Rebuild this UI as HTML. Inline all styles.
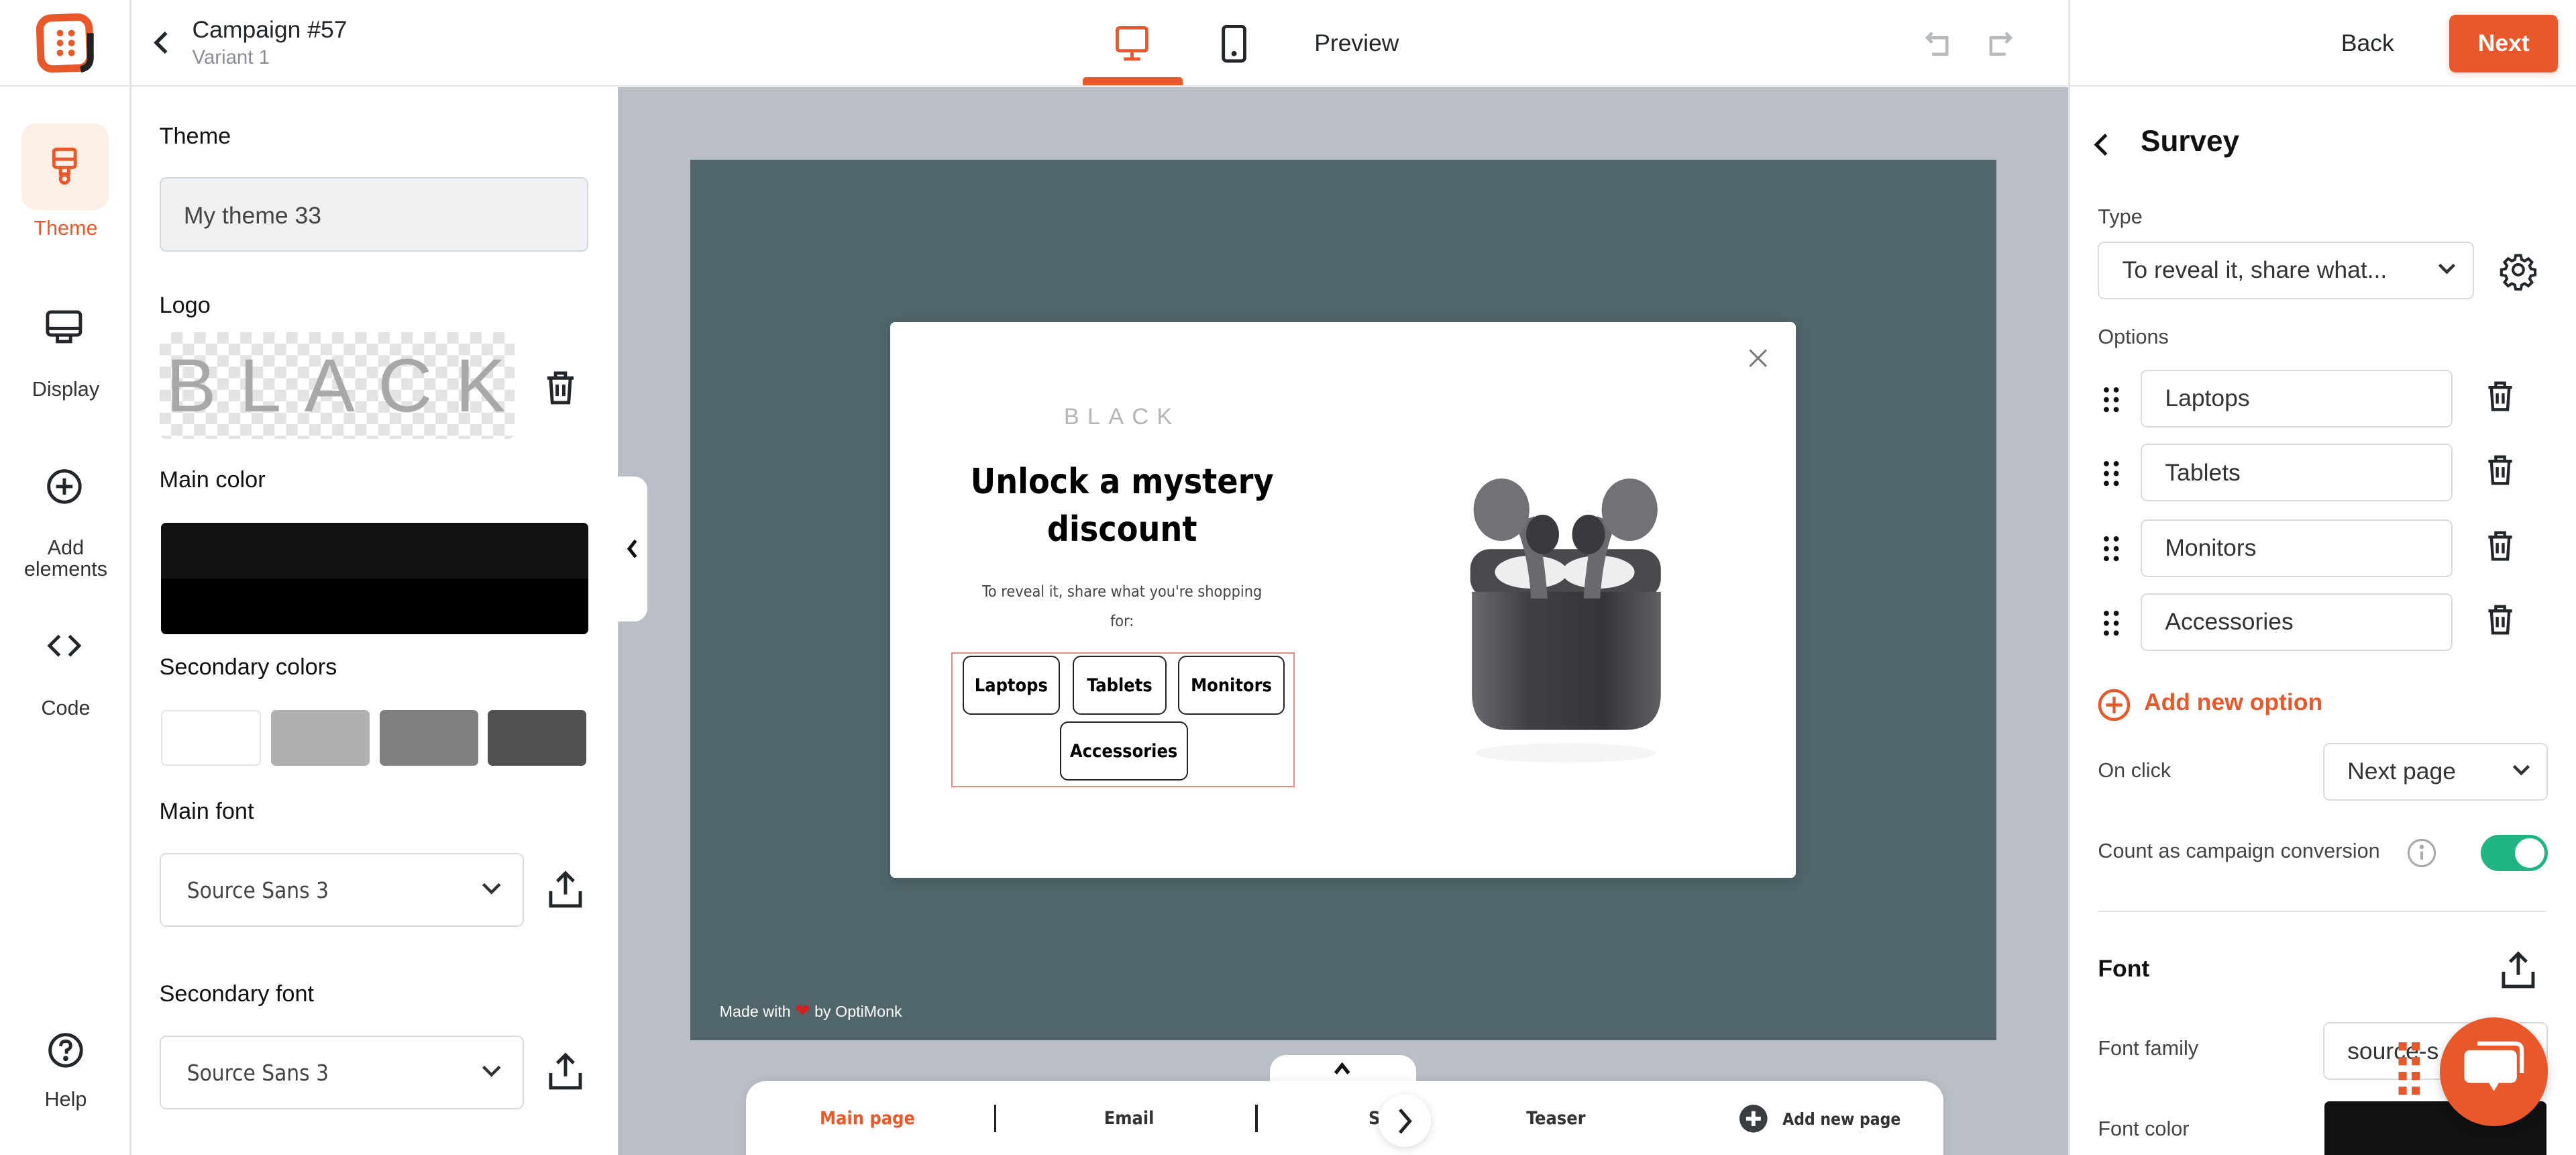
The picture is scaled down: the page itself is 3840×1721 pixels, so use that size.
<!DOCTYPE html>
<html><head><meta charset="utf-8">
<style>
html,body{margin:0;padding:0;width:3840px;height:1721px;overflow:hidden;background:#fff}
#z{zoom:2.449;width:1568px;height:703px;position:relative;overflow:hidden;font-family:"Liberation Sans",sans-serif;color:#23262b}
.a{position:absolute}
.lbl{position:absolute;font-size:14px;color:#111}
.rl{position:absolute;font-size:12.5px;color:#333;text-align:center;width:80px;left:0}
.box{position:absolute;border:1px solid #d8dbe0;border-radius:4px;background:#fff;box-sizing:border-box}
.src{font-family:"DejaVu Sans Condensed","Liberation Sans",sans-serif}
.opt{position:absolute;border:1.2px solid #222;border-radius:5px;font-weight:bold;font-size:11px;display:flex;align-items:center;justify-content:center;box-sizing:border-box;color:#000}
svg{position:absolute;overflow:visible}
.ri{font-size:14.5px;color:#333;padding-left:14px;display:flex;align-items:center}
.sm{position:absolute;font-size:12.5px;color:#444}
</style></head><body><div id="z">

<div class="a" style="left:0;top:0;width:1568px;height:52px;background:#fff;border-bottom:1px solid #e3e5e8"></div>
<div class="a" style="left:79px;top:0;width:1px;height:703px;background:#e3e5e8"></div>
<div class="a" style="left:1259px;top:0;width:1px;height:703px;background:#e3e5e8"></div>

<svg style="left:22px;top:8px" width="36" height="36" viewBox="0 0 36 36">
<rect x="2.5" y="2.5" width="30" height="31" rx="7" fill="none" stroke="#e8582a" stroke-width="4.5" transform="rotate(-2 18 18)"/>
<path d="M33 12 V27 Q33 33 27 34" fill="none" stroke="#222" stroke-width="4"/>
<g fill="#e8582a"><circle cx="14.5" cy="12" r="2"/><circle cx="21.5" cy="12" r="2"/><circle cx="14.5" cy="18" r="2"/><circle cx="21.5" cy="18" r="2"/><circle cx="14.5" cy="24" r="2"/><circle cx="21.5" cy="24" r="2"/></g>
</svg>

<div class="a" style="left:13px;top:75px;width:53px;height:53px;background:#fdeee6;border-radius:9px"></div>
<svg style="left:30px;top:90px" width="20" height="26" viewBox="0 0 20 26" fill="none" stroke="#e8582a" stroke-width="2">
<rect x="3" y="1" width="13" height="11" rx="1.5"/><line x1="3" y1="7" x2="16" y2="7"/><path d="M7 12 V16 H12 V12"/><circle cx="9.5" cy="19" r="2.5"/></svg>
<div class="rl" style="top:132px;color:#e8582a">Theme</div>
<svg style="left:27px;top:188px" width="24" height="24" viewBox="0 0 24 24" fill="none" stroke="#23262b" stroke-width="2"><rect x="2" y="2" width="20" height="14" rx="2"/><line x1="2" y1="12" x2="22" y2="12"/><path d="M8 16 V20 H16 V16"/></svg>
<div class="rl" style="top:230px">Display</div>
<svg style="left:28px;top:285px" width="22" height="22" viewBox="0 0 22 22" fill="none" stroke="#23262b" stroke-width="2"><circle cx="11" cy="11" r="9.5"/><path d="M11 6 V16 M6 11 H16"/></svg>
<div class="rl" style="top:327px;line-height:13px">Add<br>elements</div>
<svg style="left:28px;top:386px" width="22" height="14" viewBox="0 0 22 14" fill="none" stroke="#23262b" stroke-width="2"><path d="M8 1 L2 7 L8 13 M14 1 L20 7 L14 13"/></svg>
<div class="rl" style="top:424px">Code</div>
<svg style="left:29px;top:628px" width="22" height="22" viewBox="0 0 22 22" fill="none" stroke="#23262b" stroke-width="2"><circle cx="11" cy="11" r="9.5"/><path d="M8 8.5 Q8 5.5 11 5.5 Q14 5.5 14 8.3 Q14 10 11.5 11 V13"/><circle cx="11" cy="16" r="0.6" fill="#23262b"/></svg>
<div class="rl" style="top:662px">Help</div>

<svg style="left:93px;top:18px" width="10" height="16" viewBox="0 0 10 16" fill="none" stroke="#23262b" stroke-width="2.2"><path d="M8 2 L2 8 L8 14"/></svg>
<div class="a" style="left:117px;top:10px;font-size:14.5px;color:#23262b">Campaign #57</div>
<div class="a" style="left:117px;top:28px;font-size:12px;color:#8a8f96">Variant 1</div>

<div class="lbl" style="left:97px;top:75px">Theme</div>
<div class="box" style="left:97px;top:108px;width:261px;height:45px;background:#eef0f2;border-color:#d4d7dc;font-size:14.5px;color:#444;padding:14px 0 0 14px">My theme 33</div>
<div class="lbl" style="left:97px;top:178px">Logo</div>
<div class="a" style="left:97px;top:202px;width:216px;height:65px;border-radius:4px;background-color:#fff;background-image:linear-gradient(45deg,#e3e3e3 25%,transparent 25%,transparent 75%,#e3e3e3 75%),linear-gradient(45deg,#e3e3e3 25%,transparent 25%,transparent 75%,#e3e3e3 75%);background-size:14px 14px;background-position:0 0,7px 7px;font-size:46px;letter-spacing:14px;color:#a8a8a8;line-height:65px;padding-left:4px;box-sizing:border-box;overflow:hidden">BLACK</div>
<svg style="left:331px;top:225px" width="20" height="22" viewBox="0 0 20 22" fill="none" stroke="#23262b" stroke-width="2"><path d="M2 5 H18 M7 5 V2 H13 V5 M4 5 L5 20 H15 L16 5 M8 9 V16 M12 9 V16"/></svg>
<div class="lbl" style="left:97px;top:284px">Main color</div>
<div class="a" style="left:98px;top:318px;width:260px;height:68px;border-radius:3px;background:linear-gradient(#111 0 50%,#000 50%)"></div>
<div class="lbl" style="left:97px;top:398px">Secondary colors</div>
<div class="a" style="left:98px;top:432px;width:61px;height:34px;border:1px solid #e5e5e5;box-sizing:border-box;border-radius:3px;background:#fff"></div>
<div class="a" style="left:165px;top:432px;width:60px;height:34px;border-radius:3px;background:#b0b0b0"></div>
<div class="a" style="left:231px;top:432px;width:60px;height:34px;border-radius:3px;background:#808080"></div>
<div class="a" style="left:297px;top:432px;width:60px;height:34px;border-radius:3px;background:#505050"></div>
<div class="lbl" style="left:97px;top:486px">Main font</div>
<div class="box src" style="left:97px;top:519px;width:222px;height:45px;font-size:13.5px;color:#444;padding:14px 0 0 16px">Source Sans 3</div>
<svg style="left:293px;top:537px" width="12" height="8" viewBox="0 0 12 8" fill="none" stroke="#333" stroke-width="1.8"><path d="M1 1 L6 6 L11 1"/></svg>
<svg style="left:333px;top:529px" width="22" height="24" viewBox="0 0 22 24" fill="none" stroke="#23262b" stroke-width="2"><path d="M11 15 V2 M6 7 L11 2 L16 7 M2 13 V22 H20 V13"/></svg>
<div class="lbl" style="left:97px;top:597px">Secondary font</div>
<div class="box src" style="left:97px;top:630px;width:222px;height:45px;font-size:13.5px;color:#444;padding:14px 0 0 16px">Source Sans 3</div>
<svg style="left:293px;top:648px" width="12" height="8" viewBox="0 0 12 8" fill="none" stroke="#333" stroke-width="1.8"><path d="M1 1 L6 6 L11 1"/></svg>
<svg style="left:333px;top:640px" width="22" height="24" viewBox="0 0 22 24" fill="none" stroke="#23262b" stroke-width="2"><path d="M11 15 V2 M6 7 L11 2 L16 7 M2 13 V22 H20 V13"/></svg>

<svg style="left:679px;top:16px" width="20" height="22" viewBox="0 0 20 22" fill="none" stroke="#e8582a" stroke-width="2"><rect x="1" y="1" width="18" height="14" rx="1.5"/><path d="M10 15 V20 M5 20 H15"/></svg>
<div class="a" style="left:659px;top:47px;width:61px;height:5px;background:#e8582a;border-radius:2px 2px 0 0"></div>
<svg style="left:743px;top:15px" width="16" height="24" viewBox="0 0 16 24" fill="none" stroke="#23262b" stroke-width="2"><rect x="1.5" y="1" width="13" height="21" rx="2"/><circle cx="8" cy="17.5" r="0.6" fill="#23262b"/></svg>
<div class="a" style="left:800px;top:18px;font-size:14.5px;color:#23262b">Preview</div>
<svg style="left:1171px;top:18px" width="18" height="18" viewBox="0 0 18 18" fill="none" stroke="#b5b8bd" stroke-width="1.8"><path d="M5 2 L2 5 L5 8 M2 5 H14 V15 H5"/></svg>
<svg style="left:1208px;top:18px" width="18" height="18" viewBox="0 0 18 18" fill="none" stroke="#b5b8bd" stroke-width="1.8"><path d="M13 2 L16 5 L13 8 M16 5 H4 V15 H13"/></svg>
<div class="a" style="left:1425px;top:18px;font-size:14.5px;color:#23262b">Back</div>
<div class="a" style="left:1491px;top:9px;width:66px;height:35px;background:#e8582a;border-radius:4px;color:#fff;font-size:14.5px;font-weight:bold;text-align:center;line-height:35px;box-shadow:0 1px 4px rgba(232,88,42,.3)">Next</div>

<div class="a" style="left:376px;top:53px;width:883px;height:650px;background:#babfc7"></div>
<div class="a" style="left:420px;top:97px;width:795px;height:536px;background:#50666a"></div>
<div class="a" style="left:376px;top:290px;width:18px;height:88px;background:#fff;border-radius:0 8px 8px 0"></div>
<svg style="left:381px;top:328px" width="8" height="12" viewBox="0 0 8 12" fill="none" stroke="#111" stroke-width="2"><path d="M6 1 L2 6 L6 11"/></svg>
<div class="a" style="left:438px;top:609px;font-size:9.5px;color:#fff">Made with <span style="color:#d02020;font-size:11px">&#10084;</span> by OptiMonk</div>

<div class="a" style="left:542px;top:196px;width:551px;height:338px;background:#fff;border-radius:3px;box-shadow:0 2px 8px rgba(0,0,0,.15)"></div>
<svg style="left:1064px;top:212px" width="12" height="12" viewBox="0 0 12 12" stroke="#777" stroke-width="1.2"><path d="M1 1 L11 11 M11 1 L1 11"/></svg>
<div class="a" style="left:583px;top:246px;width:200px;text-align:center;font-size:14px;letter-spacing:5px;color:#b5b5b5">BLACK</div>
<div class="a src" style="left:563px;top:279px;width:240px;text-align:center;font-size:21px;font-weight:bold;line-height:29px;color:#000">Unlock a mystery discount</div>
<div class="a src" style="left:590px;top:351px;width:186px;text-align:center;font-size:9.5px;line-height:18px;color:#444">To reveal it, share what you're shopping for:</div>
<div class="a" style="left:579px;top:397px;width:209px;height:82px;border:1px solid #e88a80;box-sizing:border-box"></div>
<div class="opt src" style="left:586px;top:399px;width:59px;height:36px">Laptops</div>
<div class="opt src" style="left:653px;top:399px;width:57px;height:36px">Tablets</div>
<div class="opt src" style="left:717px;top:399px;width:65px;height:36px">Monitors</div>
<div class="opt src" style="left:645px;top:439px;width:78px;height:36px">Accessories</div>

<svg style="left:860px;top:280px" width="180" height="200" viewBox="0 0 180 200">
<defs><linearGradient id="g" x1="0" x2="1"><stop offset="0" stop-color="#6a6a6e"/><stop offset=".3" stop-color="#404044"/><stop offset=".7" stop-color="#36363a"/><stop offset="1" stop-color="#606064"/></linearGradient></defs>
<ellipse cx="93" cy="178" rx="55" ry="6" fill="#f5f5f5"/>
<rect x="35" y="54" width="116" height="30" rx="12" fill="#4a4a4e"/>
<ellipse cx="72" cy="68" rx="22" ry="10" fill="#eee"/><ellipse cx="113" cy="68" rx="22" ry="10" fill="#eee"/>
<path d="M36 80 H151 V142 Q151 164 129 164 H58 Q36 164 36 142 Z" fill="url(#g)"/>
<path d="M62 38 Q70 55 72 84 L82 84 Q80 55 74 34 Z" fill="#6a6a6e"/>
<ellipse cx="54" cy="30" rx="17" ry="19" fill="#727276"/>
<ellipse cx="79" cy="45" rx="10" ry="12" fill="#3a3a3e"/>
<path d="M124 38 Q116 55 114 84 L104 84 Q106 55 112 34 Z" fill="#6a6a6e"/>
<ellipse cx="132" cy="30" rx="17" ry="19" fill="#727276"/>
<ellipse cx="107" cy="45" rx="10" ry="12" fill="#3a3a3e"/>
</svg>

<div class="a" style="left:773px;top:642px;width:89px;height:30px;background:#fff;border-radius:10px 10px 0 0"></div>
<svg style="left:811px;top:646px" width="12" height="8" viewBox="0 0 12 8" fill="none" stroke="#111" stroke-width="2.2"><path d="M2 7 L6 2 L10 7"/></svg>
<div class="a" style="left:454px;top:658px;width:729px;height:60px;background:#fff;border-radius:12px;box-shadow:0 0 6px rgba(0,0,0,.08)"></div>
<div class="a src" style="left:499px;top:674px;font-size:11px;font-weight:bold;color:#e8582a">Main page</div>
<div class="a" style="left:605px;top:672px;width:1.5px;height:17px;background:#222"></div>
<div class="a src" style="left:672px;top:674px;font-size:11px;font-weight:bold;color:#333">Email</div>
<div class="a" style="left:764px;top:672px;width:1.5px;height:17px;background:#222"></div>
<div class="a src" style="left:833px;top:674px;font-size:11px;font-weight:bold;color:#333">S</div>
<div class="a" style="left:839px;top:666px;width:32px;height:32px;border-radius:50%;background:#fff;box-shadow:0 1px 5px rgba(0,0,0,.15)"></div>
<svg style="left:850px;top:674px" width="10" height="16" viewBox="0 0 10 16" fill="none" stroke="#222" stroke-width="2"><path d="M2 1 L8 8 L2 15"/></svg>
<div class="a src" style="left:929px;top:674px;font-size:11px;font-weight:bold;color:#333">Teaser</div>
<svg style="left:1059px;top:672px" width="17" height="17" viewBox="0 0 17 17"><circle cx="8.5" cy="8.5" r="8.5" fill="#3a3d42"/><path d="M8.5 4 V13 M4 8.5 H13" stroke="#fff" stroke-width="2.4"/></svg>
<div class="a src" style="left:1085px;top:675px;font-size:10px;font-weight:bold;color:#333">Add new page</div>

<svg style="left:1274px;top:80px" width="10" height="16" viewBox="0 0 10 16" fill="none" stroke="#111" stroke-width="2"><path d="M8 2 L2 8 L8 14"/></svg>
<div class="a" style="left:1303px;top:76px;font-size:18px;font-weight:bold;color:#111">Survey</div>
<div class="sm" style="left:1277px;top:125px">Type</div>
<div class="box ri" style="left:1277px;top:147px;width:229px;height:35px">To reveal it, share what...</div>
<svg style="left:1484px;top:160px" width="11" height="7" viewBox="0 0 11 7" fill="none" stroke="#333" stroke-width="1.8"><path d="M1 1 L5.5 5.5 L10 1"/></svg>
<svg style="left:1522px;top:153px" width="22" height="22" viewBox="0 0 24 24" fill="none" stroke="#23262b" stroke-width="1.8"><path d="M10.3 2.5h3.4l.6 2.8 2 .9 2.4-1.6 2.4 2.4-1.6 2.4.9 2 2.8.6v3.4l-2.8.6-.9 2 1.6 2.4-2.4 2.4-2.4-1.6-2 .9-.6 2.8h-3.4l-.6-2.8-2-.9-2.4 1.6-2.4-2.4 1.6-2.4-.9-2-2.8-.6v-3.4l2.8-.6.9-2-1.6-2.4 2.4-2.4 2.4 1.6 2-.9z"/><circle cx="12" cy="12" r="3.5"/></svg>
<div class="sm" style="left:1277px;top:198px">Options</div>

<svg style="left:1280px;top:235px" width="10" height="16" viewBox="0 0 10 16" fill="#111"><circle cx="2" cy="2" r="1.6"/><circle cx="8" cy="2" r="1.6"/><circle cx="2" cy="8" r="1.6"/><circle cx="8" cy="8" r="1.6"/><circle cx="2" cy="14" r="1.6"/><circle cx="8" cy="14" r="1.6"/></svg>
<div class="box ri" style="left:1303px;top:225px;width:190px;height:35px">Laptops</div>
<svg style="left:1513px;top:231px" width="18" height="20" viewBox="0 0 20 22" fill="none" stroke="#23262b" stroke-width="2"><path d="M2 5 H18 M7 5 V2 H13 V5 M4 5 L5 20 H15 L16 5 M8 9 V16 M12 9 V16"/></svg>

<svg style="left:1280px;top:280px" width="10" height="16" viewBox="0 0 10 16" fill="#111"><circle cx="2" cy="2" r="1.6"/><circle cx="8" cy="2" r="1.6"/><circle cx="2" cy="8" r="1.6"/><circle cx="8" cy="8" r="1.6"/><circle cx="2" cy="14" r="1.6"/><circle cx="8" cy="14" r="1.6"/></svg>
<div class="box ri" style="left:1303px;top:270px;width:190px;height:35px">Tablets</div>
<svg style="left:1513px;top:276px" width="18" height="20" viewBox="0 0 20 22" fill="none" stroke="#23262b" stroke-width="2"><path d="M2 5 H18 M7 5 V2 H13 V5 M4 5 L5 20 H15 L16 5 M8 9 V16 M12 9 V16"/></svg>

<svg style="left:1280px;top:326px" width="10" height="16" viewBox="0 0 10 16" fill="#111"><circle cx="2" cy="2" r="1.6"/><circle cx="8" cy="2" r="1.6"/><circle cx="2" cy="8" r="1.6"/><circle cx="8" cy="8" r="1.6"/><circle cx="2" cy="14" r="1.6"/><circle cx="8" cy="14" r="1.6"/></svg>
<div class="box ri" style="left:1303px;top:316px;width:190px;height:35px">Monitors</div>
<svg style="left:1513px;top:322px" width="18" height="20" viewBox="0 0 20 22" fill="none" stroke="#23262b" stroke-width="2"><path d="M2 5 H18 M7 5 V2 H13 V5 M4 5 L5 20 H15 L16 5 M8 9 V16 M12 9 V16"/></svg>

<svg style="left:1280px;top:371px" width="10" height="16" viewBox="0 0 10 16" fill="#111"><circle cx="2" cy="2" r="1.6"/><circle cx="8" cy="2" r="1.6"/><circle cx="2" cy="8" r="1.6"/><circle cx="8" cy="8" r="1.6"/><circle cx="2" cy="14" r="1.6"/><circle cx="8" cy="14" r="1.6"/></svg>
<div class="box ri" style="left:1303px;top:361px;width:190px;height:35px">Accessories</div>
<svg style="left:1513px;top:367px" width="18" height="20" viewBox="0 0 20 22" fill="none" stroke="#23262b" stroke-width="2"><path d="M2 5 H18 M7 5 V2 H13 V5 M4 5 L5 20 H15 L16 5 M8 9 V16 M12 9 V16"/></svg>

<svg style="left:1277px;top:419px" width="20" height="20" viewBox="0 0 20 20" fill="none" stroke="#e8582a" stroke-width="1.8"><circle cx="10" cy="10" r="8.8"/><path d="M10 5 V15 M5 10 H15"/></svg>
<div class="a" style="left:1305px;top:419px;font-size:14.5px;font-weight:bold;color:#e8582a">Add new option</div>
<div class="sm" style="left:1277px;top:462px">On click</div>
<div class="box ri" style="left:1414px;top:452px;width:137px;height:35px">Next page</div>
<svg style="left:1529px;top:465px" width="11" height="7" viewBox="0 0 11 7" fill="none" stroke="#333" stroke-width="1.8"><path d="M1 1 L5.5 5.5 L10 1"/></svg>
<div class="sm" style="left:1277px;top:511px">Count as campaign conversion</div>
<svg style="left:1465px;top:510px" width="18" height="18" viewBox="0 0 18 18" fill="none" stroke="#aaa" stroke-width="1.3"><circle cx="9" cy="9" r="8"/><path d="M9 8 V13" stroke-width="1.6"/><circle cx="9" cy="5.3" r="0.7" fill="#aaa"/></svg>
<div class="a" style="left:1510px;top:508px;width:41px;height:22px;border-radius:11px;background:#22b584"></div>
<div class="a" style="left:1531px;top:510px;width:18px;height:18px;border-radius:50%;background:#fff"></div>
<div class="a" style="left:1277px;top:554px;width:273px;height:1px;background:#e3e5e8"></div>
<div class="a" style="left:1277px;top:581px;font-size:14.5px;font-weight:bold;color:#111">Font</div>
<svg style="left:1522px;top:578px" width="22" height="24" viewBox="0 0 22 24" fill="none" stroke="#23262b" stroke-width="2"><path d="M11 15 V2 M6 7 L11 2 L16 7 M2 13 V22 H20 V13"/></svg>
<div class="sm" style="left:1277px;top:631px">Font family</div>
<div class="box ri" style="left:1414px;top:622px;width:137px;height:35px">source-s</div>
<div class="sm" style="left:1277px;top:680px">Font color</div>
<div class="a" style="left:1415px;top:670px;width:135px;height:40px;background:#111;border-radius:3px"></div>
<svg style="left:1459px;top:634px" width="16" height="36" viewBox="0 0 16 36" fill="#e8582a"><rect x="1" y="0" width="5" height="5"/><rect x="9" y="0" width="5" height="5"/><rect x="1" y="9" width="5" height="5"/><rect x="9" y="9" width="5" height="5"/><rect x="1" y="18" width="5" height="5"/><rect x="9" y="18" width="5" height="5"/><rect x="1" y="27" width="5" height="5"/><rect x="9" y="27" width="5" height="5"/></svg>
<div class="a" style="left:1485px;top:619px;width:66px;height:66px;border-radius:50%;background:#e8582a;box-shadow:0 2px 6px rgba(0,0,0,.2)"></div>
<svg style="left:1499px;top:633px" width="38" height="34" viewBox="0 0 38 34"><path d="M9 2 H32 Q36 2 36 6 V20" fill="none" stroke="#fff" stroke-width="2.5"/><path d="M5 6 H29 Q33 6 33 10 V22 Q33 26 29 26 H22 L19 31 L16 26 H5 Q1 26 1 22 V10 Q1 6 5 6 Z" fill="#fff"/></svg>

</div></body></html>
